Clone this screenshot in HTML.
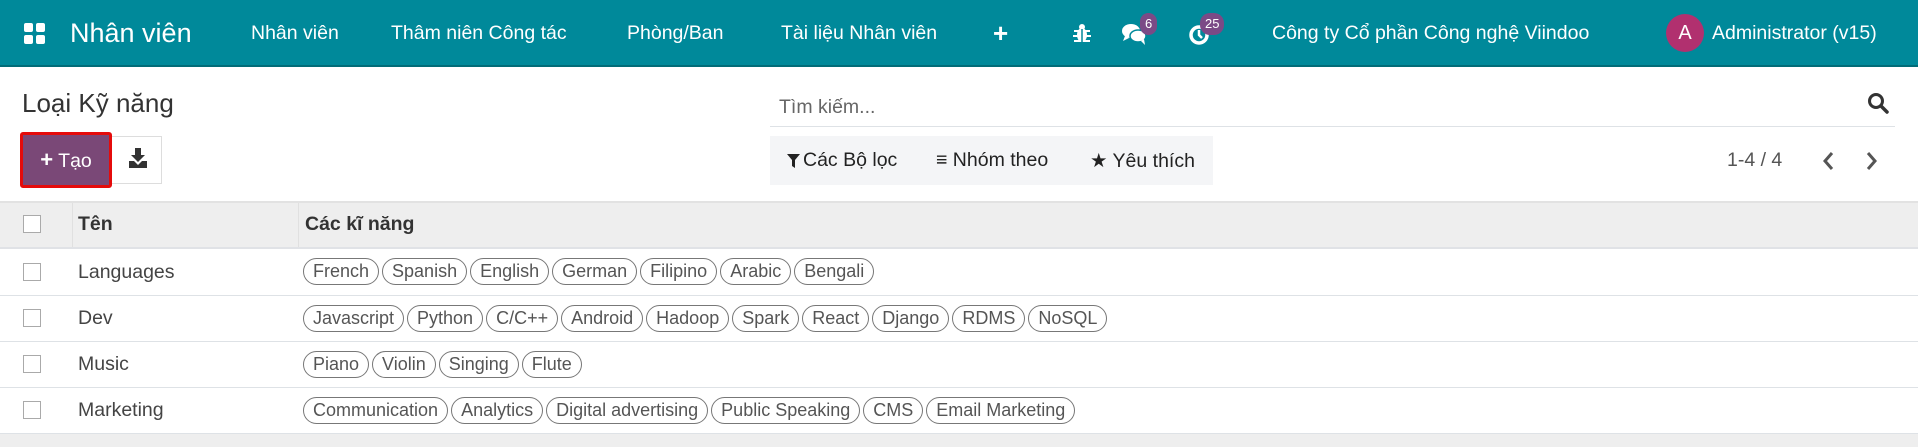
<!DOCTYPE html>
<html><head><meta charset="utf-8"><style>
*{box-sizing:border-box;margin:0;padding:0}
body{width:1918px;height:447px;overflow:hidden;background:#fff;font-family:"Liberation Sans",sans-serif;color:#4c4c4c;position:relative}
.a{position:absolute;white-space:nowrap}
.nav{position:absolute;left:0;top:0;width:1918px;height:67px;background:#00899a;border-bottom:2px solid #016c78;color:#fff}
.nav .a{top:0;line-height:66px;font-size:19.5px;color:#fff}
.badge{position:absolute;background:#7b4a86;color:#fff;font-size:13px;border-radius:10px;height:22px;line-height:22px;text-align:center;padding:0 5px}
.tag{display:inline-block;height:27px;line-height:25px;border:1px solid #777;border-radius:14px;padding:0 9px;font-size:18px;color:#555;margin-right:3px}
.row{position:absolute;left:0;width:1918px;border-bottom:1px solid #dee2e6}
.cb{position:absolute;left:23px;width:18px;height:18px;border:1px solid #aaa;background:#fff}
.name{position:absolute;left:78px;font-size:19.5px;color:#444}
.tags{position:absolute;left:303px}
</style></head><body>
<div class="nav">
  <svg class="a" style="left:24px;top:23px" width="22" height="22" viewBox="0 0 22 22" fill="#fff"><rect x="0" y="0" width="9" height="9" rx="2"/><rect x="12" y="0" width="9" height="9" rx="2"/><rect x="0" y="12" width="9" height="9" rx="2"/><rect x="12" y="12" width="9" height="9" rx="2"/></svg>
  <div class="a" style="left:70px;font-size:27px">Nhân viên</div>
  <div class="a" style="left:251px">Nhân viên</div>
  <div class="a" style="left:391px">Thâm niên Công tác</div>
  <div class="a" style="left:627px">Phòng/Ban</div>
  <div class="a" style="left:781px">Tài liệu Nhân viên</div>
  <div class="a" style="left:993px;font-size:26px;font-weight:bold">+</div>
  <svg class="a" style="left:1073px;top:23px" width="18" height="20" viewBox="0 0 18 20" fill="#fff"><ellipse cx="9" cy="12" rx="5" ry="7"/><circle cx="9" cy="4" r="3"/><path d="M1 8h16M0 13h18M1 18h16" stroke="#fff" stroke-width="2"/><path d="M9 6v14" stroke="#00899a" stroke-width="1.5"/></svg>
  <svg class="a" style="left:1121px;top:22px" width="26" height="24" viewBox="0 0 26 24" fill="#fff"><ellipse cx="10" cy="9" rx="9" ry="7"/><path d="M4 14l-2 5 6-3z"/><ellipse cx="17" cy="14" rx="8" ry="6" stroke="#00899a" stroke-width="1.5"/><path d="M20 19l4 4-1-6z"/></svg>
  <div class="badge" style="left:1140px;top:13px">6</div>
  <svg class="a" style="left:1188px;top:24px" width="22" height="22" viewBox="0 0 22 22"><circle cx="11" cy="11" r="8" fill="none" stroke="#fff" stroke-width="3.5"/><path d="M11 6v5l3 3" stroke="#fff" stroke-width="2.5" fill="none"/></svg>
  <div class="badge" style="left:1200px;top:13px">25</div>
  <div class="a" style="left:1272px">Công ty Cổ phần Công nghệ Viindoo</div>
  <div class="a" style="left:1666px;top:14px;width:38px;height:38px;line-height:38px;border-radius:50%;background:#b1306f;text-align:center;font-size:20px">A</div>
  <div class="a" style="left:1712px">Administrator (v15)</div>
</div>
<div class="a" style="left:22px;top:88px;font-size:26px;color:#333">Loại Kỹ năng</div>
<div class="a" style="left:20px;top:132px;width:92px;height:56px;border:3px solid #e50b0b;border-radius:3px;background:#7a4877;color:#fff;font-size:19.5px;line-height:50px;text-align:center"><b style="font-size:22px">+</b> Tạo</div>
<div class="a" style="left:112px;top:136px;width:50px;height:48px;border:1px solid #ddd;border-left:none"></div>
<svg class="a" style="left:128px;top:148px" width="20" height="20" viewBox="0 0 20 20" fill="#333"><path d="M7 0h6v7h4l-7 7-7-7h4z"/><path d="M1 13h5l4 4 4-4h5v7H1z"/></svg>
<div class="a" style="left:779px;top:96px;font-size:19.5px;color:#666">Tìm kiếm...</div>
<svg class="a" style="left:1867px;top:92px" width="22" height="22" viewBox="0 0 22 22"><circle cx="9" cy="9" r="6.5" fill="none" stroke="#333" stroke-width="3"/><path d="M14 14l6 6" stroke="#333" stroke-width="3.5" stroke-linecap="round"/></svg>
<div class="a" style="left:770px;top:126px;width:1125px;height:1px;background:#dee2e6"></div>
<div class="a" style="left:770px;top:136px;width:443px;height:49px;background:#f4f5f7"></div>
<svg class="a" style="left:787px;top:154px" width="13" height="14" viewBox="0 0 13 14" fill="#222"><path d="M0 0h13L8 6v8L5 12V6z"/></svg>
<div class="a" style="left:803px;top:149px;font-size:19.5px;color:#222">Các Bộ lọc</div>
<div class="a" style="left:936px;top:149px;font-size:19.5px;color:#222">≡ Nhóm theo</div>
<div class="a" style="left:1090px;top:149px;font-size:19.5px;color:#222">★ Yêu thích</div>
<div class="a" style="left:1727px;top:149px;font-size:19.5px;color:#555">1-4 / 4</div>
<svg class="a" style="left:1820px;top:151px" width="60" height="20" viewBox="0 0 60 20" fill="none" stroke="#555" stroke-width="3"><path d="M12 2l-7 8 7 8"/><path d="M48 2l7 8-7 8"/></svg>
<div class="row" style="top:201px;height:48px;background:#eee;border-top:2px solid #e2e2e2;border-bottom:2px solid #e0e2e6"></div>
<div class="a" style="left:72px;top:203px;width:1px;height:44px;background:#e0e0e0"></div>
<div class="a" style="left:298px;top:203px;width:1px;height:44px;background:#e0e0e0"></div>
<div class="cb" style="top:215px"></div>
<div class="a" style="left:78px;top:213px;font-size:19.5px;font-weight:bold;color:#333">Tên</div>
<div class="a" style="left:305px;top:213px;font-size:19.5px;font-weight:bold;color:#333">Các kĩ năng</div>
<div class="row" style="top:249px;height:47px"><div class="cb" style="top:14px"></div><div class="name" style="top:12px">Languages</div><div class="tags" style="top:9px"><span class="tag">French</span><span class="tag">Spanish</span><span class="tag">English</span><span class="tag">German</span><span class="tag">Filipino</span><span class="tag">Arabic</span><span class="tag">Bengali</span></div></div>
<div class="row" style="top:296px;height:46px"><div class="cb" style="top:13px"></div><div class="name" style="top:11px">Dev</div><div class="tags" style="top:9px"><span class="tag">Javascript</span><span class="tag">Python</span><span class="tag">C/C++</span><span class="tag">Android</span><span class="tag">Hadoop</span><span class="tag">Spark</span><span class="tag">React</span><span class="tag">Django</span><span class="tag">RDMS</span><span class="tag">NoSQL</span></div></div>
<div class="row" style="top:342px;height:46px"><div class="cb" style="top:13px"></div><div class="name" style="top:11px">Music</div><div class="tags" style="top:9px"><span class="tag">Piano</span><span class="tag">Violin</span><span class="tag">Singing</span><span class="tag">Flute</span></div></div>
<div class="row" style="top:388px;height:46px"><div class="cb" style="top:13px"></div><div class="name" style="top:11px">Marketing</div><div class="tags" style="top:9px"><span class="tag">Communication</span><span class="tag">Analytics</span><span class="tag">Digital advertising</span><span class="tag">Public Speaking</span><span class="tag">CMS</span><span class="tag">Email Marketing</span></div></div>
<div class="a" style="left:0;top:434px;width:1918px;height:13px;background:#eee"></div>
</body></html>
